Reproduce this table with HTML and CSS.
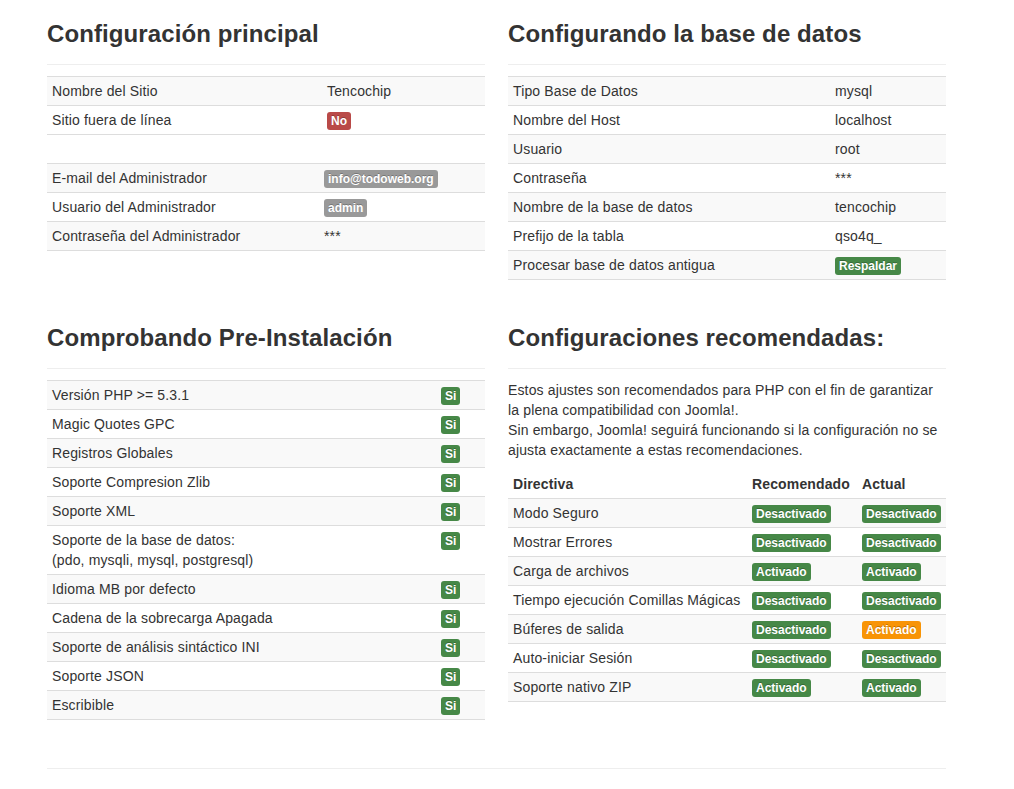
FILE: index.html
```html
<!DOCTYPE html>
<html lang="es">
<head>
<meta charset="utf-8">
<title>Instalación</title>
<link rel="stylesheet" href="styles.css">
</head>
<body>
<div class="page">
  <div class="grid">
    <section class="col">
      <h3>Configuración principal</h3>
      <div class="divider"></div>
      <table class="tbl t-main">
        <tbody>
          <tr class="odd"><td class="c1">Nombre del Sitio</td><td>Tencochip</td></tr>
          <tr><td class="c1">Sitio fuera de línea</td><td><span class="label label-important">No</span></td></tr>
        </tbody>
      </table>
      <table class="tbl t-admin">
        <tbody>
          <tr class="odd"><td class="c1">E-mail del Administrador</td><td><span class="label">info@todoweb.org</span></td></tr>
          <tr><td class="c1">Usuario del Administrador</td><td><span class="label">admin</span></td></tr>
          <tr class="odd"><td class="c1">Contraseña del Administrador</td><td>***</td></tr>
        </tbody>
      </table>
    </section>
    <section class="col">
      <h3>Configurando la base de datos</h3>
      <div class="divider"></div>
      <table class="tbl t-db">
        <tbody>
          <tr class="odd"><td class="c1">Tipo Base de Datos</td><td>mysql</td></tr>
          <tr><td class="c1">Nombre del Host</td><td>localhost</td></tr>
          <tr class="odd"><td class="c1">Usuario</td><td>root</td></tr>
          <tr><td class="c1">Contraseña</td><td>***</td></tr>
          <tr class="odd"><td class="c1">Nombre de la base de datos</td><td>tencochip</td></tr>
          <tr><td class="c1">Prefijo de la tabla</td><td>qso4q_</td></tr>
          <tr class="odd"><td class="c1">Procesar base de datos antigua</td><td><span class="label label-success">Respaldar</span></td></tr>
        </tbody>
      </table>
    </section>
  </div>

  <div class="grid grid-second">
    <section class="col">
      <h3>Comprobando Pre-Instalación</h3>
      <div class="divider"></div>
      <table class="tbl t-pre">
        <tbody>
          <tr class="odd"><td class="c1">Versión PHP &gt;= 5.3.1</td><td><span class="label label-success">Si</span></td></tr>
          <tr><td class="c1">Magic Quotes GPC</td><td><span class="label label-success">Si</span></td></tr>
          <tr class="odd"><td class="c1">Registros Globales</td><td><span class="label label-success">Si</span></td></tr>
          <tr><td class="c1">Soporte Compresion Zlib</td><td><span class="label label-success">Si</span></td></tr>
          <tr class="odd"><td class="c1">Soporte XML</td><td><span class="label label-success">Si</span></td></tr>
          <tr><td class="c1">Soporte de la base de datos:<br>(pdo, mysqli, mysql, postgresql)</td><td><span class="label label-success">Si</span></td></tr>
          <tr class="odd"><td class="c1">Idioma MB por defecto</td><td><span class="label label-success">Si</span></td></tr>
          <tr><td class="c1">Cadena de la sobrecarga Apagada</td><td><span class="label label-success">Si</span></td></tr>
          <tr class="odd"><td class="c1">Soporte de análisis sintáctico INI</td><td><span class="label label-success">Si</span></td></tr>
          <tr><td class="c1">Soporte JSON</td><td><span class="label label-success">Si</span></td></tr>
          <tr class="odd"><td class="c1">Escribible</td><td><span class="label label-success">Si</span></td></tr>
        </tbody>
      </table>
    </section>
    <section class="col">
      <h3>Configuraciones recomendadas:</h3>
      <div class="divider"></div>
      <p class="intro">Estos ajustes son recomendados para PHP con el fin de garantizar la plena compatibilidad con Joomla!.<br>Sin embargo, Joomla! seguirá funcionando si la configuración no se ajusta exactamente a estas recomendaciones.</p>
      <table class="tbl t-rec">
        <thead>
          <tr><th class="c1">Directiva</th><th class="c2">Recomendado</th><th>Actual</th></tr>
        </thead>
        <tbody>
          <tr class="odd"><td class="c1">Modo Seguro</td><td class="c2"><span class="label label-success">Desactivado</span></td><td><span class="label label-success">Desactivado</span></td></tr>
          <tr><td class="c1">Mostrar Errores</td><td class="c2"><span class="label label-success">Desactivado</span></td><td><span class="label label-success">Desactivado</span></td></tr>
          <tr class="odd"><td class="c1">Carga de archivos</td><td class="c2"><span class="label label-success">Activado</span></td><td><span class="label label-success">Activado</span></td></tr>
          <tr><td class="c1">Tiempo ejecución Comillas Mágicas</td><td class="c2"><span class="label label-success">Desactivado</span></td><td><span class="label label-success">Desactivado</span></td></tr>
          <tr class="odd"><td class="c1">Búferes de salida</td><td class="c2"><span class="label label-success">Desactivado</span></td><td><span class="label label-warning">Activado</span></td></tr>
          <tr><td class="c1">Auto-iniciar Sesión</td><td class="c2"><span class="label label-success">Desactivado</span></td><td><span class="label label-success">Desactivado</span></td></tr>
          <tr class="odd"><td class="c1">Soporte nativo ZIP</td><td class="c2"><span class="label label-success">Activado</span></td><td><span class="label label-success">Activado</span></td></tr>
        </tbody>
      </table>
    </section>
  </div>
  <div class="footer-rule"></div>
</div>
</body>
</html>
```

FILE: styles.css
```css
html, body {
  margin: 0;
  padding: 0;
  background: #fff;
}
body {
  font-family: "Liberation Sans", Arial, Helvetica, sans-serif;
  font-size: 14px;
  line-height: 20px;
  color: #333;
  letter-spacing: 0.14px;
}
.page {
  width: 899px;
  padding: 14px 0 0 47px;
}
.grid {
  display: grid;
  grid-template-columns: 438px 438px;
  column-gap: 23px;
  align-items: start;
}
.grid-second {
  margin-top: 38px;
}
h3 {
  margin: 0;
  font-size: 24px;
  line-height: 40px;
  font-weight: bold;
  color: #333;
  letter-spacing: 0.1px;
}
.divider {
  margin-top: 10px;
  margin-bottom: 11px;
  border-top: 1px solid #eee;
}
.tbl {
  width: 100%;
  border-collapse: collapse;
  border-spacing: 0;
  border-bottom: 1px solid #ddd;
}
.tbl td, .tbl th {
  padding: 4px 5px;
  line-height: 20px;
  text-align: left;
  vertical-align: top;
  border-top: 1px solid #ddd;
}
.tbl th {
  font-weight: bold;
  vertical-align: bottom;
}
.tbl thead tr:first-child th {
  border-top: 0;
}
.tbl tr.odd td {
  background: #f9f9f9;
}
.t-main .c1 { width: 265px; }
.t-admin {
  margin-top: 28px;
}
.t-admin .c1 { width: 262px; }
.t-db .c1 { width: 312px; }
.t-pre .c1 { width: 379px; }
.t-rec .c1 { width: 229px; }
.t-rec .c2 { width: 100px; }
.intro {
  margin: 0 0 10px;
}
.label {
  display: inline-block;
  padding: 2px 4px;
  font-size: 12px;
  font-weight: bold;
  line-height: 14px;
  letter-spacing: 0;
  color: #fff;
  white-space: nowrap;
  vertical-align: baseline;
  background-color: #999;
  border-radius: 3px;
  text-shadow: 0 -1px 0 rgba(0, 0, 0, 0.25);
}
.label-success { background-color: #468847; }
.label-important { background-color: #b94a48; }
.label-warning { background-color: #f89406; }
.footer-rule {
  margin-top: 48px;
  border-top: 1px solid #eee;
}
```
